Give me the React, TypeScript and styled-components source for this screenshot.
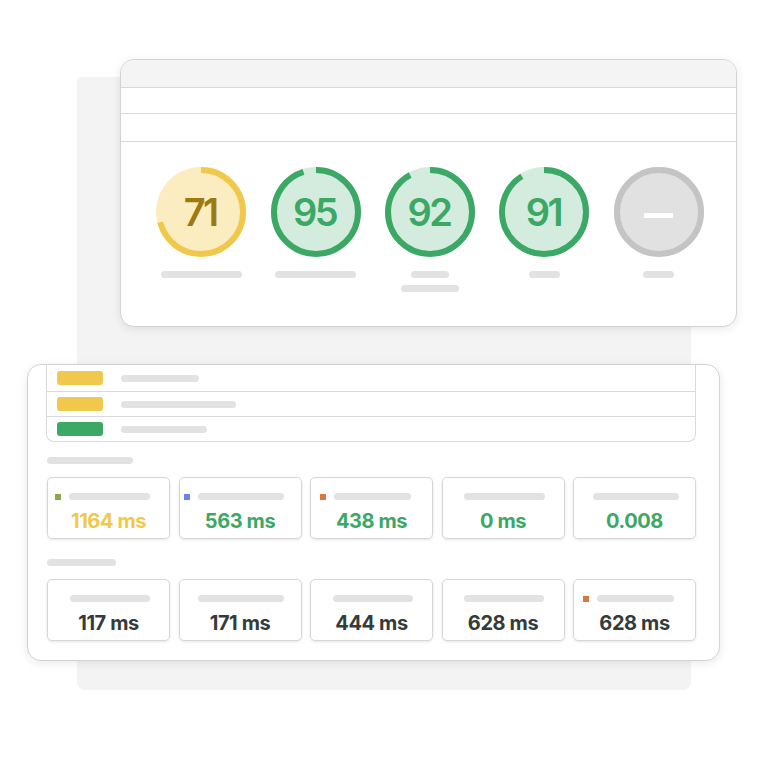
import styled, { createGlobalStyle } from "styled-components"

const GlobalStyle = createGlobalStyle`
	html, body {
		margin: 0;
		padding: 0;
		background: #ffffff;
		font-family: Inter, "Noto Sans", "Liberation Sans", sans-serif;
	}
	* {
		box-sizing: border-box;
	}
`

const colors = {
	green: "#3ba865",
	greenFill: "#d4ecdd",
	yellow: "#f0c94c",
	yellowFill: "#fbedbf",
	yellowText: "#9b7a10",
	gray: "#c4c4c4",
	grayFill: "#e1e1e1",
	bar: "#e2e2e2",
	line: "#d9d9d9",
	dark: "#343c3b",
	olive: "#8aa84a",
	blue: "#6f80f0",
	orange: "#d9773c",
}

type Tone = "good" | "average" | "none"

const tone = {
	good: { stroke: colors.green, fill: colors.greenFill, text: colors.green },
	average: {
		stroke: colors.yellow,
		fill: colors.yellowFill,
		text: colors.yellowText,
	},
	none: { stroke: colors.gray, fill: colors.grayFill, text: "#ffffff" },
}

const gauges: { score: number | null; tone: Tone; bars: number[] }[] = [
	{ score: 71, tone: "average", bars: [81] },
	{ score: 95, tone: "good", bars: [81] },
	{ score: 92, tone: "good", bars: [38, 58] },
	{ score: 91, tone: "good", bars: [31] },
	{ score: null, tone: "none", bars: [31] },
]

const audits = [
	{ color: colors.yellow, bar: 78 },
	{ color: colors.yellow, bar: 115 },
	{ color: colors.green, bar: 86 },
]

type Metric = { value: string; color: string; marker?: string; bar: number }

const vitals: Metric[] = [
	{ value: "1164 ms", color: colors.yellow, marker: colors.olive, bar: 81 },
	{ value: "563 ms", color: colors.green, marker: colors.blue, bar: 86 },
	{ value: "438 ms", color: colors.green, marker: colors.orange, bar: 77 },
	{ value: "0 ms", color: colors.green, bar: 81 },
	{ value: "0.008", color: colors.green, bar: 86 },
]

const timings: Metric[] = [
	{ value: "117 ms", color: colors.dark, bar: 80 },
	{ value: "171 ms", color: colors.dark, bar: 86 },
	{ value: "444 ms", color: colors.dark, bar: 80 },
	{ value: "628 ms", color: colors.dark, bar: 80 },
	{ value: "628 ms", color: colors.dark, marker: colors.orange, bar: 77 },
]

function Gauge({ score, kind }: { score: number | null; kind: Tone }) {
	const t = tone[kind]
	const r = 42
	const c = 2 * Math.PI * r
	const len = score === null ? c : (c * score) / 100
	return (
		<Ring>
			<svg width="90" height="90" viewBox="0 0 90 90">
				<circle cx="45" cy="45" r="45" fill={t.fill} />
				<circle
					cx="45"
					cy="45"
					r={r}
					fill="none"
					stroke={t.stroke}
					strokeWidth="6"
					strokeDasharray={`${len} ${c}`}
					transform="rotate(-90 45 45)"
				/>
			</svg>
			{score === null ? <Dash /> : <Score $color={t.text}>{score}</Score>}
		</Ring>
	)
}

function MetricCard({ metric }: { metric: Metric }) {
	return (
		<MetricBox>
			<MetricHead>
				{metric.marker && <Marker $color={metric.marker} />}
				<Bar $w={metric.bar} />
			</MetricHead>
			<MetricValue $color={metric.color}>{metric.value}</MetricValue>
		</MetricBox>
	)
}

export default function App() {
	return (
		<>
			<GlobalStyle />
			<Stage>
				<Backdrop />
				<TopCard>
					<HeaderBand />
					<TabRow $h={26} />
					<TabRow $h={28} />
					<GaugeRow>
						{gauges.map((g, i) => (
							<GaugeCol key={i}>
								<Gauge score={g.score} kind={g.tone} />
								<Labels>
									{g.bars.map((w, j) => (
										<Bar key={j} $w={w} />
									))}
								</Labels>
							</GaugeCol>
						))}
					</GaugeRow>
				</TopCard>
				<BottomCard>
					<AuditTable>
						{audits.map((a, i) => (
							<AuditRow key={i} $first={i === 0}>
								<Pill $color={a.color} />
								<Bar $w={a.bar} />
							</AuditRow>
						))}
					</AuditTable>
					<SectionLabel $w={86} />
					<MetricGrid>
						{vitals.map((m, i) => (
							<MetricCard key={i} metric={m} />
						))}
					</MetricGrid>
					<SectionLabel $w={69} $top={20} />
					<MetricGrid>
						{timings.map((m, i) => (
							<MetricCard key={i} metric={m} />
						))}
					</MetricGrid>
				</BottomCard>
			</Stage>
		</>
	)
}

const Stage = styled.div`
	position: relative;
	width: 768px;
	height: 768px;
	overflow: hidden;
	display: flex;
	flex-direction: column;
	align-items: flex-start;
	padding-top: 59px;
`

const Backdrop = styled.div`
	position: absolute;
	left: 77px;
	top: 77px;
	width: 614px;
	height: 613px;
	background: #f3f3f3;
	border-radius: 4px 4px 8px 8px;
	z-index: 0;
`

const Card = styled.div`
	position: relative;
	z-index: 1;
	background: #ffffff;
	border: 1px solid #d3d3d3;
	border-radius: 14px;
	box-shadow: 0 2px 10px rgba(0, 0, 0, 0.09);
	overflow: hidden;
`

const TopCard = styled(Card)`
	margin-left: 120px;
	width: 617px;
	height: 268px;
	display: flex;
	flex-direction: column;
`

const HeaderBand = styled.div`
	height: 28px;
	flex-shrink: 0;
	background: #f4f4f4;
	border-bottom: 1px solid ${colors.line};
`

const TabRow = styled.div<{ $h: number }>`
	height: ${({ $h }) => $h}px;
	flex-shrink: 0;
	border-bottom: 1px solid ${colors.line};
`

const GaugeRow = styled.div`
	display: grid;
	grid-template-columns: repeat(5, 114.4px);
	padding: 25px 22px 0 23px;
`

const GaugeCol = styled.div`
	display: flex;
	flex-direction: column;
	align-items: center;
	gap: 14px;
`

const Ring = styled.div`
	position: relative;
	width: 90px;
	height: 90px;
	display: flex;
	align-items: center;
	justify-content: center;

	svg {
		position: absolute;
		inset: 0;
	}
`

const Score = styled.span<{ $color: string }>`
	position: relative;
	font-size: 38px;
	font-weight: 600;
	letter-spacing: -2.5px;
	line-height: 1;
	color: ${({ $color }) => $color};
	margin-left: -2px;
`

const Dash = styled.span`
	position: relative;
	width: 29px;
	height: 5px;
	margin-top: 6px;
	background: #ffffff;
`

const Labels = styled.div`
	display: flex;
	flex-direction: column;
	align-items: center;
	gap: 7px;
`

const Bar = styled.span<{ $w: number }>`
	display: block;
	width: ${({ $w }) => $w}px;
	height: 7px;
	border-radius: 4px;
	background: ${colors.bar};
	flex-shrink: 0;
`

const BottomCard = styled(Card)`
	margin-top: 37px;
	margin-left: 27px;
	width: 693px;
	height: 297px;
	padding: 0 23px 0 18px;
`

const AuditTable = styled.div`
	border: 1px solid ${colors.line};
	border-top: none;
	border-radius: 0 0 8px 8px;
`

const AuditRow = styled.div<{ $first: boolean }>`
	height: ${({ $first }) => ($first ? 26 : 25)}px;
	display: flex;
	align-items: center;
	gap: 18px;
	padding-left: 10px;
	border-top: ${({ $first }) => ($first ? "none" : `1px solid ${colors.line}`)};
`

const Pill = styled.span<{ $color: string }>`
	width: 46px;
	height: 14px;
	border-radius: 3px;
	background: ${({ $color }) => $color};
`

const SectionLabel = styled(Bar)<{ $top?: number }>`
	margin: ${({ $top }) => $top ?? 15}px 0 13px 1px;
`

const MetricGrid = styled.div`
	display: grid;
	grid-template-columns: repeat(5, 1fr);
	gap: 8.5px;
	margin-left: 1px;
`

const MetricBox = styled.div`
	height: 62px;
	border: 1px solid #d6d6d6;
	border-radius: 5px;
	box-shadow: 0 1px 3px rgba(0, 0, 0, 0.1);
	display: flex;
	flex-direction: column;
	align-items: center;
	padding-top: 15px;
	gap: 10px;
`

const MetricHead = styled.div`
	position: relative;
	display: flex;
	align-items: center;
	height: 7px;
	margin-left: 2px;
`

const Marker = styled.span<{ $color: string }>`
	position: absolute;
	right: calc(100% + 8px);
	top: 0.5px;
	width: 6px;
	height: 6px;
	background: ${({ $color }) => $color};
`

const MetricValue = styled.span<{ $color: string }>`
	font-size: 20px;
	font-weight: 700;
	letter-spacing: -0.4px;
	line-height: 22px;
	color: ${({ $color }) => $color};
`
